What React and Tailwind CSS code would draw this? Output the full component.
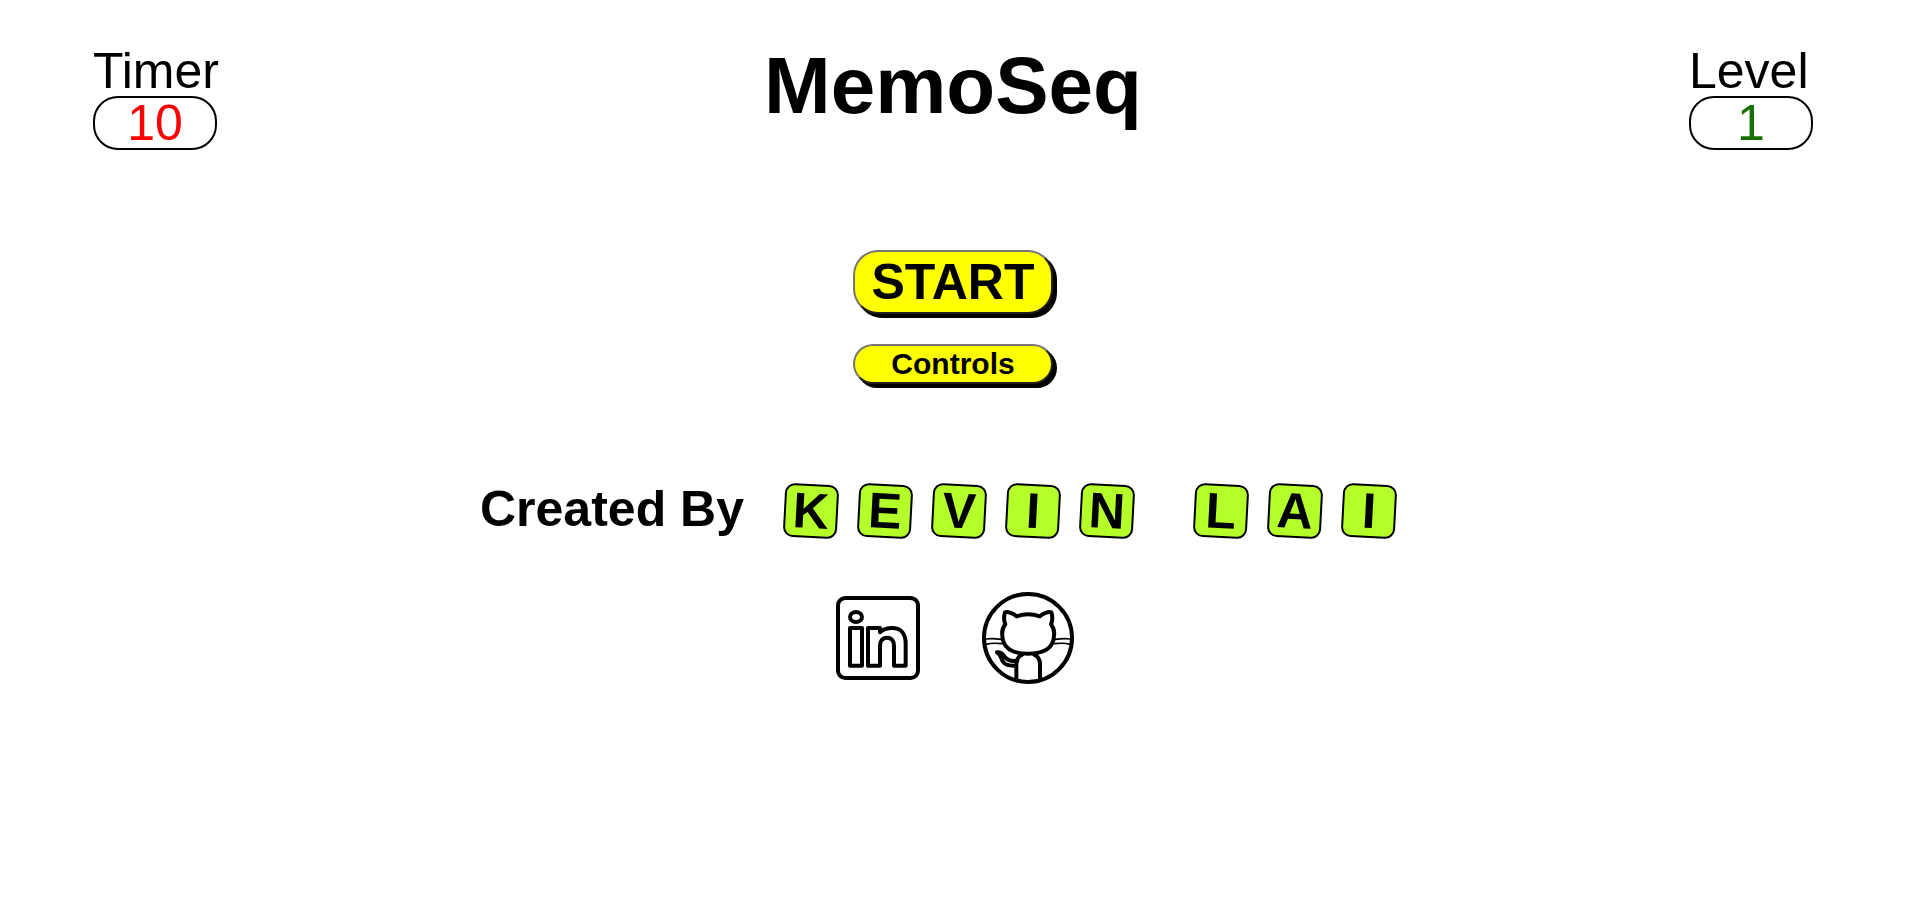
const FIRST_NAME = ["K", "E", "V", "I", "N"];
const LAST_NAME = ["L", "A", "I"];

function Stat({ label, value, color }) {
  return (
    <div className="w-31 whitespace-nowrap text-[50px] leading-[50px]">
      <div>{label}</div>
      <div className={`rounded-[25px] border-2 border-black text-center ${color}`}>{value}</div>
    </div>
  );
}

function PillButton({ children, size }) {
  return (
    <button
      type="button"
      className={`flex w-50 items-center justify-center border-2 border-t-[#767676] border-r-[#212121] border-b-[#212121] border-l-[#767676] bg-[#ffff00] font-bold shadow-[4px_4px_0_black] ${size}`}
    >
      {children}
    </button>
  );
}

function Tiles({ letters }) {
  return (
    <div className="flex gap-5">
      {letters.map((letter) => (
        <span
          key={letter}
          className="size-[54px] rotate-3 rounded-[10px] border-2 border-black bg-[#b4ff29] text-center leading-[50px]"
        >
          {letter}
        </span>
      ))}
    </div>
  );
}

function LinkedInIcon() {
  return (
    <svg viewBox="9 9 300 300" className="size-25" fill="none" stroke="black" strokeWidth="12" strokeLinejoin="round" aria-hidden="true">
      <rect x="39" y="39" width="240" height="240" rx="22" />
      <ellipse cx="93" cy="96" rx="18" ry="15" />
      <path d="M75 129H111V242H75Z" />
      <path d="M129 129H165V142C174 133 187 129 201 129C229 129 242 148 242 175V242H207V183C207 168 200 158 186 158C172 158 165 168 165 183V242H129Z" />
    </svg>
  );
}

function GitHubIcon() {
  return (
    <svg viewBox="9 9 300 300" className="size-25" fill="none" stroke="black" strokeWidth="12" strokeLinejoin="round" strokeLinecap="round" aria-hidden="true">
      <circle cx="159" cy="159" r="132" />
      <path d="M90 82C99 79 115 86 125 94C147 86 172 86 194 94C204 86 220 79 229 82C233 94 232 108 228 118C236 128 239 139 237 153C235 187 210 206 159 206C109 206 84 187 82 153C80 139 83 128 91 118C87 108 86 94 90 82Z" />
      <path d="M141 209C130 214 124 224 124 239V286M178 209C189 214 195 224 195 239V286" />
      <path d="M127 227C112 229 98 226 91 218C85 208 76 200 66 202C75 206 78 216 81 225C87 239 98 243 122 242" />
      <path strokeWidth="5" d="M32 162C49 160 63 161 78 163M33 178C48 174 64 174 80 176M287 162C270 160 256 161 241 163M286 178C271 174 255 174 239 176" />
    </svg>
  );
}

export default function App() {
  return (
    <main className="bg-white pt-[46px] pr-px font-['Liberation_Sans',Arial,sans-serif] text-black">
      <header className="flex items-start justify-between px-[93px]">
        <Stat label="Timer" value="10" color="text-[#ff0000]" />
        <h1 className="text-[80px] leading-[80px] font-bold">MemoSeq</h1>
        <Stat label="Level" value="1" color="text-[#167000]" />
      </header>

      <div className="mt-25 flex flex-col items-center gap-[30px]">
        <PillButton size="h-16 rounded-[25px] text-[50px] leading-[50px]">START</PillButton>
        <PillButton size="h-10 rounded-[20px] text-[30px] leading-[30px]">Controls</PillButton>
      </div>

      <section className="mt-25 flex justify-center text-[50px] leading-[50px] font-bold">
        <h2>Created By</h2>
        <div className="ml-10 flex gap-15 pr-[30px]">
          <Tiles letters={FIRST_NAME} />
          <Tiles letters={LAST_NAME} />
        </div>
      </section>

      <nav className="mt-[50px] flex justify-center gap-[50px]">
        <a href="#linkedin" aria-label="LinkedIn">
          <LinkedInIcon />
        </a>
        <a href="#github" aria-label="GitHub">
          <GitHubIcon />
        </a>
      </nav>
    </main>
  );
}
